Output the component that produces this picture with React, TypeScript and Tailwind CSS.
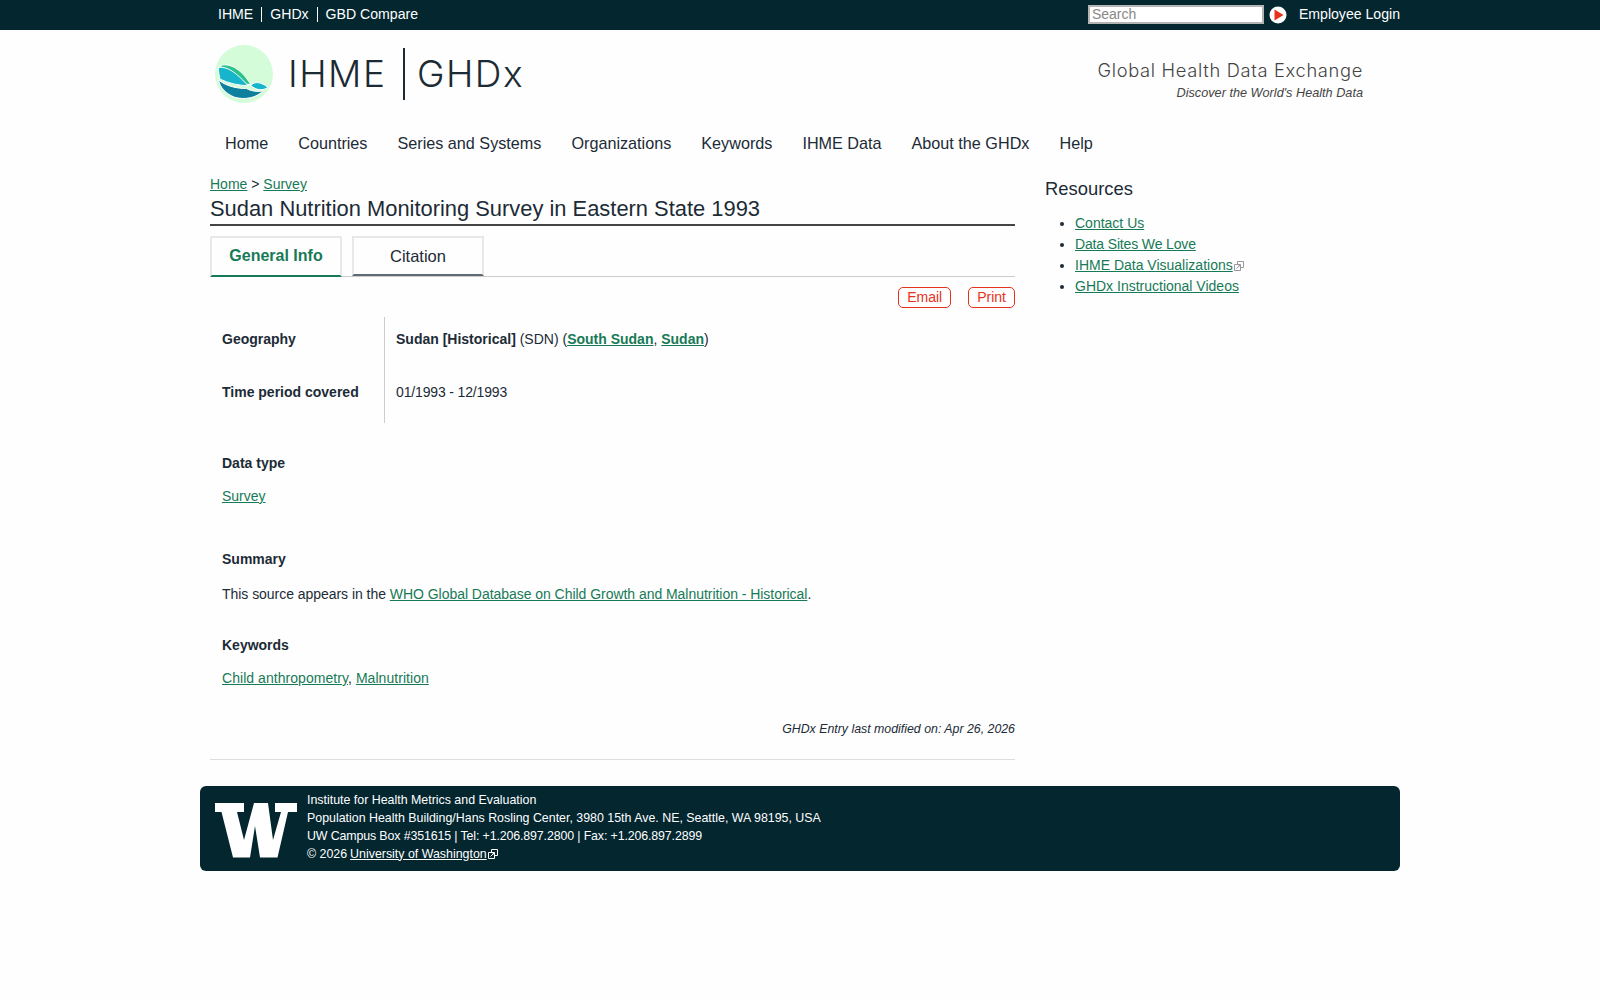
import type { ReactNode } from "react";

const NAV = ["Home", "Countries", "Series and Systems", "Organizations", "Keywords", "IHME Data", "About the GHDx", "Help"];
const TOP = ["IHME", "GHDx", "GBD Compare"];

function Ext({ className }: { className?: string }) {
  return (
    <svg viewBox="0 0 10 10" className={"inline-block w-[10px] h-[10px] align-[-1px] " + (className ?? "")} fill="none" stroke="currentColor" strokeWidth="1">
      <path d="M3.5 3V.5h6v6H7" />
      <path d="M.5 3.5h6v6h-6z" />
      <path d="M2.5 7.5L6 4M4 3.8h2.2V6" />
    </svg>
  );
}

function A({ children, bold }: { children: ReactNode; bold?: boolean }) {
  return <a href="#" className={"text-[#177a56] underline " + (bold ? "font-bold" : "")}>{children}</a>;
}

function Logo() {
  return (
    <svg viewBox="0 0 175 175" className="w-[58px] h-[58px]">
      <circle cx="87.5" cy="87.5" r="87.5" fill="#d4fcd9" />
      <g stroke="#fff" strokeWidth="3" strokeLinejoin="round">
        <path d="M15 62C50 52 85 80 108 120C80 118 45 100 15 62Z" fill="#2ac48a" />
        <path d="M10 68C40 62 72 92 100 123C70 122 40 115 15 103C12 90 10 78 10 68Z" fill="#16b5cc" />
        <path d="M108 122C120 108 140 112 160 128C145 138 125 138 108 122Z" fill="#16b5cc" />
        <path d="M11 106C35 125 70 132 95 131C110 140 130 142 145 138C125 160 90 166 60 158C35 148 15 130 11 106Z" fill="#0e7f9c" />
      </g>
    </svg>
  );
}

function UwLogo() {
  return (
    <svg viewBox="0 0 82 54.5" className="w-[82px] h-[54.5px] mt-[4px]" fill="#fff">
      <path d="M0 0H29V9H22L29 37L39 0H53L58 37L66 9H60V0H82V9H73L62.5 54.5H45L40 23L35 54.5H18L6.5 9H0Z" />
    </svg>
  );
}

export default function App() {
  return (
    <div className="min-h-[1000px] bg-[#fefefe] text-[#1c2b36] font-['Liberation_Sans',Arial,sans-serif]">
      <div className="h-[30px] bg-[#03262f] text-white">
        <div className="w-[1200px] mx-auto flex items-center h-full text-[14.1px]">
          <div className="flex pl-[10px] pb-[1px]">
            {TOP.map((t, i) => (
              <a key={t} href="#" className={"px-[8px] leading-[15px] " + (i < 2 ? "border-r border-white" : "")}>{t}</a>
            ))}
          </div>
          <div className="ml-auto flex items-center">
            <input placeholder="Search" className="w-[176px] h-[19px] bg-white border-2 border-[#b4b4b4] px-[2px] pb-[2px] text-[14px] leading-[14px] placeholder:text-[#888] outline-none" />
            <svg viewBox="0 0 18 18" className="w-[18px] h-[18px] ml-[5px]">
              <circle cx="9" cy="9" r="8.5" fill="#fff" />
              <path d="M5.5 3.5L14.5 9L5.5 14.5Z" fill="#e8311a" />
            </svg>
            <a href="#" className="ml-[12px]">Employee Login</a>
          </div>
        </div>
      </div>

      <div className="w-[1200px] mx-auto">
        <div className="flex items-center h-[88px] pl-[15px] pr-[37px]">
          <Logo />
          <div className="ml-[15px] flex items-center font-['Inter',sans-serif] font-light text-[37px] text-[#1b2a33] tracking-[1.5px]">
            <span>IHME</span>
            <span className="ml-[17px] mr-[12px] w-[1.5px] h-[52px] bg-[#1b2a33]" />
            <span>GHDx</span>
          </div>
          <div className="ml-auto text-right pt-[12px]">
            <div className="font-['Inter',sans-serif] font-light text-[18.3px] leading-[24px] text-[#444] tracking-[0.68px]">Global Health Data Exchange</div>
            <div className="italic text-[12.7px] leading-[20px] text-[#444] mt-[1px]">Discover the World's Health Data</div>
          </div>
        </div>

        <nav className="flex pl-[10px] h-[50px] pt-[1px] items-center text-[16.2px]">
          {NAV.map((n) => (
            <a key={n} href="#" className="px-[15px]">{n}</a>
          ))}
        </nav>

        <div className="flex pl-[10px] pt-[7px]">
          <main className="w-[805px] text-[14px]">
            <div className="leading-[19px] mb-[1px]"><A>Home</A> &gt; <A>Survey</A></div>
            <h1 className="text-[21.9px] leading-[28px] border-b-2 border-[#444] pb-[1px]">Sudan Nutrition Monitoring Survey in Eastern State 1993</h1>

            <div className="flex gap-[10px] mt-[10px] border-b border-[#ccc] h-[41px]">
              <div className="w-[132px] h-[41px] pb-[1px] border-2 border-[#e8e8e8] border-b-[#177a56] flex items-center justify-center text-[16px] font-bold text-[#177a56]">General Info</div>
              <div className="w-[132px] h-[40px] border-2 border-[#e8e8e8] border-b-[#5f6b73] flex items-center justify-center text-[16.5px]">Citation</div>
            </div>

            <div className="flex justify-end gap-[17px] mt-[10px] text-[14px] text-[#e8311a]">
              <a href="#" className="px-[8px] h-[21px] leading-[19px] border border-[#e8311a] rounded-[5px]">Email</a>
              <a href="#" className="px-[8px] h-[21px] leading-[19px] border border-[#e8311a] rounded-[5px]">Print</a>
            </div>

            <div className="flex mt-[9px] h-[106px]">
              <div className="w-[175px] border-r border-[#ccc] pl-[12px] font-bold">
                <div className="h-[53px] pt-[12px] leading-[20px]">Geography</div>
                <div className="h-[53px] pt-[12px] leading-[20px]">Time period covered</div>
              </div>
              <div className="pl-[11px]">
                <div className="h-[53px] pt-[12px] leading-[20px]"><b>Sudan [Historical]</b> (SDN) (<A bold>South Sudan</A>, <A bold>Sudan</A>)</div>
                <div className="h-[53px] pt-[12px] leading-[20px] tracking-[-0.15px]">01/1993 - 12/1993</div>
              </div>
            </div>

            <div className="pl-[12px]">
              <div className="font-bold leading-[20px] mt-[30px]">Data type</div>
              <div className="leading-[20px] mt-[13px]"><A>Survey</A></div>
              <div className="font-bold leading-[20px] mt-[43px]">Summary</div>
              <div className="leading-[20px] mt-[15px] tracking-[-0.04px]">This source appears in the <A>WHO Global Database on Child Growth and Malnutrition - Historical</A>.</div>
              <div className="font-bold leading-[20px] mt-[31px]">Keywords</div>
              <div className="leading-[20px] mt-[13px] tracking-[0.05px]"><A>Child anthropometry</A>, <A>Malnutrition</A></div>
            </div>
            <div className="text-right italic text-[12.35px] leading-[20px] mt-[31px]">GHDx Entry last modified on: Apr 26, 2026</div>
            <div className="border-t border-[#ddd] mt-[20px]" />
          </main>

          <aside className="ml-[30px] text-[14px]">
            <h2 className="text-[18.4px] leading-[24px] mt-[2px]">Resources</h2>
            <ul className="list-disc pl-[30px] mt-[12px]">
              <li className="leading-[21px]"><A>Contact Us</A></li>
              <li className="leading-[21px] tracking-[-0.15px]"><A>Data Sites We Love</A></li>
              <li className="leading-[21px]"><A>IHME Data Visualizations</A> <Ext className="text-[#999] ml-[-3px]" /></li>
              <li className="leading-[21px]"><A>GHDx Instructional Videos</A></li>
            </ul>
          </aside>
        </div>

        <footer className="mt-[26px] h-[85px] rounded-[6px] bg-[#03262f] text-white flex items-center pl-[15px] text-[12.4px] leading-[18px]">
          <UwLogo />
          <div className="ml-[10px] mt-[-4px]">
            <div>Institute for Health Metrics and Evaluation</div>
            <div>Population Health Building/Hans Rosling Center, 3980 15th Ave. NE, Seattle, WA 98195, USA</div>
            <div className="tracking-[-0.13px]">UW Campus Box #351615 | Tel: +1.206.897.2800 | Fax: +1.206.897.2899</div>
            <div>© 2026 <a href="#" className="underline ml-[-0.5px]">University of Washington</a> <Ext className="ml-[-2px]" /></div>
          </div>
        </footer>
      </div>
    </div>
  );
}
